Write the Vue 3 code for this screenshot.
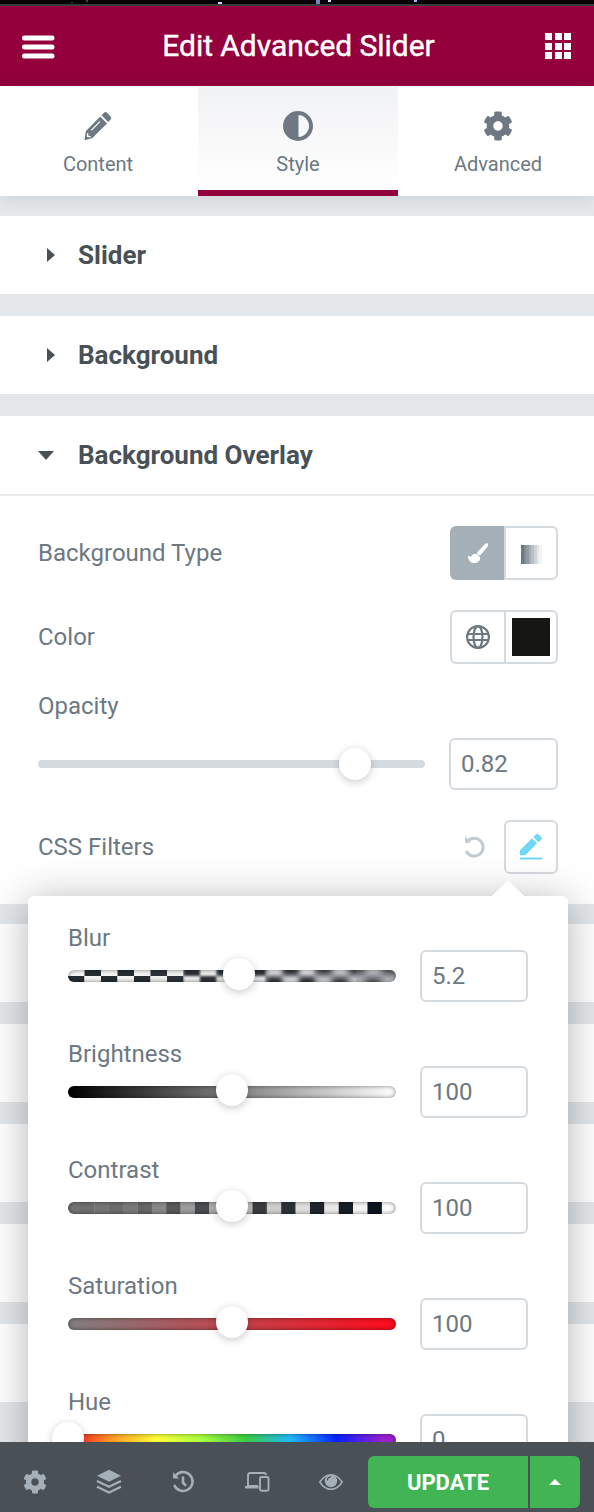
<script setup>
const COG = 'M487.4 315.7l-42.6-24.6c4.3-23.2 4.3-47 0-70.2l42.6-24.6c4.9-2.8 7.1-8.6 5.5-14-11.1-35.6-30-67.8-54.7-94.6-3.8-4.1-10-5.1-14.8-2.3L380.8 110c-17.9-15.4-38.5-27.3-60.8-35.1V25.8c0-5.6-3.9-10.5-9.4-11.7-36.7-8.2-74.3-7.8-109.2 0-5.5 1.2-9.4 6.1-9.4 11.7V75c-22.2 7.9-42.8 19.8-60.8 35.1L88.7 85.5c-4.9-2.8-11-1.9-14.8 2.3-24.7 26.7-43.6 58.9-54.7 94.6-1.7 5.4.6 11.2 5.5 14L67.3 221c-4.3 23.2-4.3 47 0 70.2l-42.6 24.6c-4.9 2.8-7.1 8.6-5.5 14 11.1 35.6 30 67.8 54.7 94.6 3.8 4.1 10 5.1 14.8 2.3l42.6-24.6c17.9 15.4 38.5 27.3 60.8 35.1v49.2c0 5.6 3.9 10.5 9.4 11.7 36.7 8.2 74.3 7.8 109.2 0 5.5-1.2 9.4-6.1 9.4-11.7v-49.2c22.2-7.9 42.8-19.8 60.8-35.1l42.6 24.6c4.9 2.8 11 1.9 14.8-2.3 24.7-26.7 43.6-58.9 54.7-94.6 1.5-5.5-.7-11.3-5.6-14.1zM256 336c-44.1 0-80-35.9-80-80s35.9-80 80-80 80 35.9 80 80-35.9 80-80 80z'
const gridCells = [0, 10, 19].flatMap((y) => [0, 10, 19].map((x) => ({ x, y })))
const filters = [
  { name: 'Blur', kind: 'blur', value: '5.2', pos: 52 },
  { name: 'Brightness', kind: 'brightness', value: '100', pos: 50 },
  { name: 'Contrast', kind: 'contrast', value: '100', pos: 50 },
  { name: 'Saturation', kind: 'saturation', value: '100', pos: 50 },
  { name: 'Hue', kind: 'hue', value: '0', pos: 0 },
]
const contrastCells = [
  '#737373', '#6e6f6f', '#747474', '#6c6d6d', '#787878', '#646566', '#898989', '#58595a',
  '#9c9c9c', '#4a4d4f', '#acacac', '#42464a', '#bebebe', '#383c40', '#cfcfcf', '#2d3237',
  '#dedede', '#21262e', '#e9e9e9', '#181e27', '#f4f4f4', '#0e141f', '#fbfbfb',
]
const blurCells = Array.from({ length: 20 }, (_, i) => ({
  x: i * 16.5,
  dark: i % 2 === 0 ? 6 : -6,
  light: i % 2 === 0 ? -6 : 6,
}))
// The checker sharpness falls off in slices from left to right.
const blurSlices = [
  { x: 0, w: 82, soft: 0, fade: 0 },
  { x: 82, w: 33, soft: 1, fade: 0.05 },
  { x: 115, w: 33, soft: 2, fade: 0.06 },
  { x: 148, w: 50, soft: 3, fade: 0.08 },
  { x: 198, w: 50, soft: 4, fade: 0.1 },
  { x: 248, w: 40, soft: 5, fade: 0.2 },
  { x: 288, w: 40, soft: 6, fade: 0.4 },
]
</script>

<template>
  <div class="panel">
    <div class="strip"></div>
    <header class="header">
      <svg class="menu" width="34" height="26" viewBox="0 0 34 26">
        <g fill="#fff"><rect x="0" y="2.500" width="32.500" height="5" rx="2.200" /><rect x="0" y="11.500" width="32.500" height="5" rx="2.200" /><rect x="0" y="20.500" width="32.500" height="5" rx="2.200" /></g>
      </svg>
      <h1>Edit Advanced Slider</h1>
      <svg class="apps" width="27" height="26" viewBox="0 0 27 26">
        <rect v-for="(c, i) in gridCells" :key="i" :x="c.x" :y="c.y" width="7" height="7" fill="#fff" />
      </svg>
    </header>

    <nav class="tabs">
      <div class="tab">
        <svg width="30" height="30" viewBox="0 0 30 30">
          <path fill="#6d7882" d="M17.200 5.500l6.800 7L9.400 27 2.600 28.900a.8.8 0 0 1-1-1L2.800 20.300zM18.500 4.300l2.500-2.500a2.200 2.200 0 0 1 3 0L27.600 5.400a2.200 2.200 0 0 1 0 3l-2.500 2.700z" />
          <path fill="none" stroke="#fff" stroke-width="1.200" stroke-linecap="round" d="M8.700 18.900L16.600 10.900" />
          <path fill="none" stroke="#fff" stroke-width="1.400" stroke-linejoin="round" stroke-linecap="round" d="M4.700 22.600L4.400 25.200 7.200 25.600" />
        </svg>
        <span>Content</span>
      </div>
      <div class="tab active">
        <svg width="30" height="30" viewBox="0 0 30 30">
          <circle cx="15" cy="15" r="13" fill="none" stroke="#6d7882" stroke-width="4" />
          <path fill="#6d7882" d="M15.500 2v26H15a13 13 0 0 1 0-26z" />
        </svg>
        <span>Style</span>
      </div>
      <div class="tab">
        <svg width="30" height="30" viewBox="0 0 512 512"><path fill="#6d7882" :d="COG" /></svg>
        <span>Advanced</span>
      </div>
    </nav>

    <main class="sections">
      <section class="section closed"><i class="caret right"></i><h2>Slider</h2></section>
      <section class="section closed"><i class="caret right"></i><h2>Background</h2></section>
      <section class="section open"><i class="caret down"></i><h2>Background Overlay</h2></section>
      <div class="controls">
        <div class="row">
          <label>Background Type</label>
          <div class="choices">
            <span class="choice selected">
              <svg width="22" height="22" viewBox="0 0 22 22">
                <path fill="#fff" d="M20.800 1.800c-.7-.7-1.900-.5-2.800.3L10.600 9.800c-.7.800-.6 1.900.5 2.900 1 .9 2 1 2.700.1L20.400 4.800c.7-1 1.100-2.300.4-3zM9.400 11.700c-2.400-.3-3.900.7-4.600 2.100-.7 1.300-1.800 1.100-4 -.6C.8 17.300 3 21 7.200 21c4.200 0 6.300-2.800 5.900-5.800z" />
              </svg>
            </span>
            <span class="choice"><i class="gradient"></i></span>
          </div>
        </div>
        <div class="row color-row">
          <label>Color</label>
          <div class="choices">
            <span class="choice">
              <svg width="24" height="24" viewBox="0 0 24 24" fill="none" stroke="#6d7882" stroke-width="2.200">
                <circle cx="12" cy="12" r="10.900" /><ellipse cx="12" cy="12" rx="4.500" ry="10.900" /><path d="M1.500 9h21M1.500 15h21" />
              </svg>
            </span>
            <span class="choice"><i class="swatch"></i></span>
          </div>
        </div>
        <label class="opacity-label">Opacity</label>
        <div class="row opacity-row">
          <div class="track"><i class="handle opacity-handle"></i></div>
          <div class="number wide">0.82</div>
        </div>
        <div class="row filter-row">
          <label>CSS Filters</label>
          <svg class="undo" width="22" height="24" viewBox="0 0 22 24">
            <path fill="none" stroke="#c2cbd2" stroke-width="3" d="M3.400 6.400A8.900 8.900 0 1 1 2.200 16" />
            <path fill="#c2cbd2" d="M1 1.200l2.200 2.200L7.200 7.800H1z" />
          </svg>
          <span class="edit">
            <svg width="24" height="28" viewBox="0 0 24 28">
              <path fill="#71d7f7" d="M1 17.200L13.100 5.200l5 5L6.300 22.200H1zM14.400 4l2.500-2.500a2 2 0 0 1 2.800 0L22.400 4.200a1.800 1.800 0 0 1 0 2.500l-2.900 2.500zM1 24.600h22v2H1z" />
            </svg>
          </span>
        </div>
        <div class="popover">
          <div v-for="f in filters" :key="f.name" class="filter">
            <div class="filter-main">
              <label>{{ f.name }}</label>
              <div class="bar" :class="f.kind">
                <div class="fill">
                  <svg v-if="f.kind === 'blur'" width="328" height="12" viewBox="0 0 328 12">
                    <defs>
                      <filter v-for="n in 6" :id="'soft' + n" :key="n" filterUnits="userSpaceOnUse" x="-20" y="-10" width="370" height="32" color-interpolation-filters="sRGB">
                        <feGaussianBlur :stdDeviation="n * 0.62" />
                      </filter>
                      <clipPath v-for="(s, i) in blurSlices" :id="'slice' + i" :key="i">
                        <rect :x="s.x" y="0" :width="s.w" height="12" />
                      </clipPath>
                    </defs>
                    <g v-for="(s, i) in blurSlices" :key="i" :clip-path="`url(#slice${i})`">
                      <g :filter="s.soft ? `url(#soft${s.soft})` : undefined">
                        <g v-for="c in blurCells" :key="c.x">
                          <rect :x="c.x" :y="c.light" width="16.500" height="12" fill="#f4f4f4" />
                          <rect :x="c.x" :y="c.dark" width="16.500" height="12" fill="#282d32" />
                        </g>
                      </g>
                      <rect :x="s.x" y="0" :width="s.w" height="12" fill="#92979a" :opacity="s.fade" />
                    </g>
                  </svg>
                  <svg v-if="f.kind === 'contrast'" width="328" height="12" viewBox="0 0 328 12">
                    <rect v-for="(c, i) in contrastCells" :key="i" :x="-2.500 + i * 14.380" y="0" width="14.600" height="12" :fill="c" />
                  </svg>
                </div>
                <i class="handle" :style="{ left: f.pos + '%' }"></i>
              </div>
            </div>
            <div class="number">{{ f.value }}</div>
          </div>
        </div>
      </div>
      <section v-for="n in 5" :key="n" class="section closed" :class="{ first: n === 1 }"></section>
    </main>

    <footer class="footer">
      <div class="tools">
        <svg width="24" height="24" viewBox="0 0 512 512"><path fill="#a4afb7" :d="COG" /></svg>
        <svg width="26" height="26" viewBox="0 0 26 26">
          <path fill="#a4afb7" d="M13 .8l12 6-12 6-12-6z" />
          <path fill="none" stroke="#a4afb7" stroke-width="2.200" d="M1 12l12 5.800L25 12M1 17.700l12 5.800 12-5.800" />
        </svg>
        <svg width="24" height="24" viewBox="0 0 24 24">
          <path fill="none" stroke="#a4afb7" stroke-width="2.500" d="M4.500 5.700A9.500 9.500 0 1 1 3.200 15" />
          <path fill="none" stroke="#a4afb7" stroke-width="2.600" stroke-linecap="round" stroke-linejoin="round" d="M12 7.500v5.300l2.300 2.200" />
          <path fill="#a4afb7" d="M2 2.300l6.200 6.200H2z" />
        </svg>
        <svg width="26" height="24" viewBox="0 0 26 24" fill="none" stroke="#a4afb7" stroke-width="1.900">
          <path d="M14 16H4V5.500Q4 3 6.500 3H20q2 0 2 2" /><path stroke-width="2.600" d="M1 17.200h13.500" /><rect x="16" y="7" width="8.500" height="13.800" rx="1.500" />
        </svg>
        <svg width="26" height="24" viewBox="0 0 26 24">
          <path fill="none" stroke="#a4afb7" stroke-width="1.500" d="M1.800 12Q6.500 4.700 13 4.700T24.200 12Q19.500 19.300 13 19.300T1.800 12z" />
          <circle cx="13" cy="11" r="6.200" fill="#a4afb7" />
          <path fill="none" stroke="#495157" stroke-width="1.200" stroke-linecap="round" d="M9.300 10q.4-2.800 3.200-3.200" />
        </svg>
      </div>
      <button class="update">UPDATE</button>
      <button class="more"><i class="caret up"></i></button>
    </footer>
  </div>
</template>

<style>
body { background: #e4e8eb; }
</style>

<style scoped>
* { box-sizing: border-box; }
.panel { width: 594px; height: 1512px; overflow: hidden; display: flex; flex-direction: column; background: #e4e8eb; font-family: Roboto, sans-serif; color: #6d7882; }
.strip {
  height: 6px; flex: none; border-bottom: 2px solid #3b3b3b;
  background:
    linear-gradient(#34466e, #34466e) 71px 2px / 2px 1px no-repeat,
    linear-gradient(#444, #444) 86px 0 / 2px 2px no-repeat,
    linear-gradient(#c8d7ff, #c8d7ff) 218px 2px / 4px 2px no-repeat,
    linear-gradient(#7287bd, #7287bd) 316px 0 / 4px 4px no-repeat,
    linear-gradient(#d0daff, #d0daff) 328px 0 / 3px 2px no-repeat,
    linear-gradient(#a0b7ee, #a0b7ee) 414px 0 / 3px 2px no-repeat,
    #020204;
}
.header { height: 80px; flex: none; background: #93003c; display: flex; align-items: center; justify-content: space-between; padding: 0 22px 0 22px; color: #fff; }
.header h1 { margin: 0 2px 0 -2px; font-size: 30px; line-height: 40px; font-weight: 400; letter-spacing: -0.05px; -webkit-text-stroke: 0.4px #fff; white-space: nowrap; }
.tabs { height: 110px; flex: none; display: grid; grid-template-columns: 198px 200px 1fr; background: #fff; box-shadow: 0 2px 18px rgba(0, 0, 0, 0.1); position: relative; }
.tab { display: flex; flex-direction: column; align-items: center; padding-top: 25px; font-size: 20px; line-height: 24px; gap: 11px; }
.tab:first-child { padding-right: 2px; }
.tab:last-child { padding-left: 4px; }
.tab.active { background: linear-gradient(#f1f2f4, #fff); border-bottom: 6px solid #93003c; }
.sections { flex: 1; min-height: 0; padding-top: 20px; }
.section { height: 78px; margin-bottom: 22px; background: #fff; display: flex; align-items: center; color: #495157; }
.section h2 { margin: 0; font-size: 26px; font-weight: 700; line-height: 32px; }
.section.open { height: 80px; margin: 0; border-bottom: 2px solid #e6e9ec; }
.section.first { margin-top: 20px; }
.caret { width: 0; height: 0; border: 0 solid transparent; flex: none; }
.caret.right { border-width: 7px 0 7px 8px; border-left-color: #495157; margin: 0 23px 0 47px; }
.caret.down { border-width: 9px 8px 0; border-top-color: #495157; margin: 1px 24px 0 38px; }
.caret.up { border-width: 0 6px 6px; border-bottom-color: #fff; }
.controls { height: 408px; background: #fff; padding: 30px 36px 0 38px; font-size: 24px; line-height: 28px; position: relative; }
.row { display: flex; align-items: center; justify-content: space-between; height: 54px; }
.color-row { margin-top: 30px; }
.choices { display: flex; }
.choice { width: 54px; height: 54px; border: 2px solid #d5dadf; border-left-width: 0; border-radius: 0 6px 6px 0; display: flex; align-items: center; justify-content: center; }
.choice:first-child { border-left-width: 2px; border-radius: 6px 0 0 6px; width: 56px; margin-right: -2px; }
.choice:last-child { border-left-width: 2px; border-radius: 0 6px 6px 0; }
.choice.selected { background: #a4afb7; border-color: #a4afb7 #d5dadf #a4afb7 #a4afb7; }
.gradient { width: 21px; height: 19px; margin-top: 2px; background: linear-gradient(90deg, #6d7882 0 12%, #838b94 12% 25%, #9299a1 25% 37%, #a8aeb4 37% 50%, #bbc0c5 50% 62%, #d0d3d6 62% 75%, #e5e7e9 75% 87%, #f3f4f5 87%); }
.swatch { width: 38px; height: 38px; background: #161613; }
.opacity-label { display: block; margin-top: 28px; }
.opacity-row { height: 52px; margin-top: 18px; }
.track { width: 387px; height: 8px; border-radius: 4px; background: #d5dadf; position: relative; }
.handle { position: absolute; top: -12px; width: 32px; height: 32px; margin-left: -16px; border-radius: 50%; background: #fff; box-shadow: 0 2px 8px rgba(0, 0, 0, 0.22); }
.opacity-handle { left: 82%; }
.number { width: 108px; height: 52px; flex: none; border: 2px solid #d5dadf; border-radius: 6px; padding: 0 10px; font-size: 24px; line-height: 48px; background: #fff; }
.number.wide { width: 109px; }
.filter-row { margin-top: 30px; }
.undo { margin: 0 18px 0 auto; }
.edit { width: 54px; height: 54px; border: 2px solid #d5dadf; border-radius: 6px; display: flex; align-items: center; justify-content: center; }
.popover { position: absolute; z-index: 2; left: 28px; top: 400px; width: 540px; height: 620px; border-radius: 6px; background: #fff; padding: 28px 40px 0; box-shadow: 0 4px 40px rgba(0, 0, 0, 0.3); }
.popover::before { content: ""; position: absolute; top: -16px; left: 464px; border: solid transparent; border-width: 0 16px 16px; border-bottom-color: #fff; }
.filter { height: 116px; display: flex; justify-content: space-between; }
.filter-main label { display: block; }
.filter .number { margin-top: 26px; }
.bar { width: 328px; height: 12px; margin-top: 18px; position: relative; }
.bar .handle { top: -12px; }
.fill { width: 100%; height: 100%; border-radius: 6px; overflow: hidden; position: relative; }
.fill svg { display: block; }
.fill::after { content: ""; position: absolute; inset: 0; border-radius: 6px; box-shadow: inset 0 0 4px rgba(0, 0, 0, 0.5); }
.brightness .fill { background: linear-gradient(90deg, #000, #fff); }
.saturation .fill { background: linear-gradient(90deg, #808080, #ff0a1a); }
.hue .fill { background: linear-gradient(90deg, #f02020 0, #ff5722 7%, #ffa026 14%, #ffff37 27%, #adff40 40%, #3ccc40 54%, #20b8ff 68%, #0a20ff 82%, #9a20d0 96%); }
.footer { height: 70px; flex: none; background: #495157; position: relative; z-index: 3; display: flex; padding: 14px 14px 4px 0; }
.tools { width: 368px; display: grid; grid-template-columns: repeat(5, 74px); justify-items: center; align-items: center; margin-left: -2px; margin-right: 2px; }
.footer button { border: 0; background: #41b553; color: #fff; font-family: inherit; padding: 0; height: 52px; display: flex; align-items: center; justify-content: center; }
.footer .update { width: 160px; border-radius: 6px 0 0 6px; font-size: 22px; font-weight: 700; }
.footer .more { width: 50px; margin-left: 2px; border-radius: 0 6px 6px 0; }
</style>
